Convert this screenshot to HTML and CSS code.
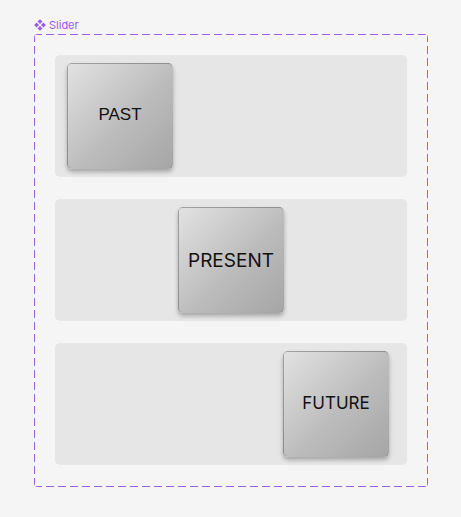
FILE: index.html
```html
<!DOCTYPE html>
<html lang="en">
<head>
    <meta charset="UTF-8">
    <meta name="viewport" content="width=device-width, initial-scale=1.0">
    <title>Slider</title>
    <link rel="stylesheet" href="styles.css">
</head>
<body>
    <div class="component-label">
        <svg class="component-icon" width="12" height="12" viewBox="0 0 12 12">
            <path d="M6 0.2 L8.4 2.6 L6 5 L3.6 2.6 Z"/>
            <path d="M6 7 L8.4 9.4 L6 11.8 L3.6 9.4 Z"/>
            <path d="M2.6 3.6 L5 6 L2.6 8.4 L0.2 6 Z"/>
            <path d="M9.4 3.6 L11.8 6 L9.4 8.4 L7 6 Z"/>
        </svg>
        <span>Slider</span>
    </div>

    <!-- Slider variants -->
    <div class="frame">
        <div class="track track-start">
            <div class="knob past">PAST</div>
        </div>
        <div class="track track-center">
            <div class="knob present">PRESENT</div>
        </div>
        <div class="track track-end">
            <div class="knob future">FUTURE</div>
        </div>
    </div>
</body>
</html>
```

FILE: styles.css
```css
body {
    margin: 0;
    padding: 17px 0 0 34px;
    background: #f5f5f5;
    font-family: 'Inter', 'Noto Sans', sans-serif;
}

.component-label {
    display: flex;
    align-items: center;
    gap: 3px;
    height: 15px;
    margin-bottom: 2px;
    color: #9b57f2;
    font-size: 11px;
}

.component-icon {
    fill: #9b57f2;
}

.frame {
    width: 394px;
    height: 453px;
    box-sizing: border-box;
    padding: 21px;
    display: flex;
    flex-direction: column;
    gap: 22px;
    border-radius: 4px;
    background:
        repeating-linear-gradient(90deg, #9f5ee8 0 8px, transparent 8px 12px) top left / 100% 1px no-repeat,
        repeating-linear-gradient(90deg, #9f5ee8 0 8px, transparent 8px 12px) bottom left / 100% 1px no-repeat,
        repeating-linear-gradient(180deg, #9f5ee8 0 8px, transparent 8px 12px) top left / 1px 100% no-repeat,
        repeating-linear-gradient(180deg, #9f5ee8 0 8px, transparent 8px 12px) top right / 1px 100% no-repeat;
}

.track {
    height: 122px;
    background: #e6e6e6;
    border-radius: 5px;
    display: flex;
    align-items: flex-start;
    padding: 8px 18px 0 12px;
    box-sizing: border-box;
}

.track-center {
    justify-content: center;
    padding-left: 0;
    padding-right: 0;
}

.track-end {
    justify-content: flex-end;
}

.knob {
    width: 106px;
    height: 106px;
    box-sizing: border-box;
    border: 1px solid rgba(0, 0, 0, 0.15);
    border-radius: 5px;
    background: linear-gradient(135deg, #e2e2e2, #bcbcbc 55%, #a6a6a6);
    box-shadow: 0 3px 4px rgba(0, 0, 0, 0.28);
    display: flex;
    align-items: center;
    justify-content: center;
    color: #111;
    font-size: 17px;
}

.past {
    font-family: 'Liberation Sans', Arial, sans-serif;
    font-size: 17px;
    padding-bottom: 2px;
}

.present {
    font-size: 19px;
}

.future {
    padding-bottom: 3px;
}
```
